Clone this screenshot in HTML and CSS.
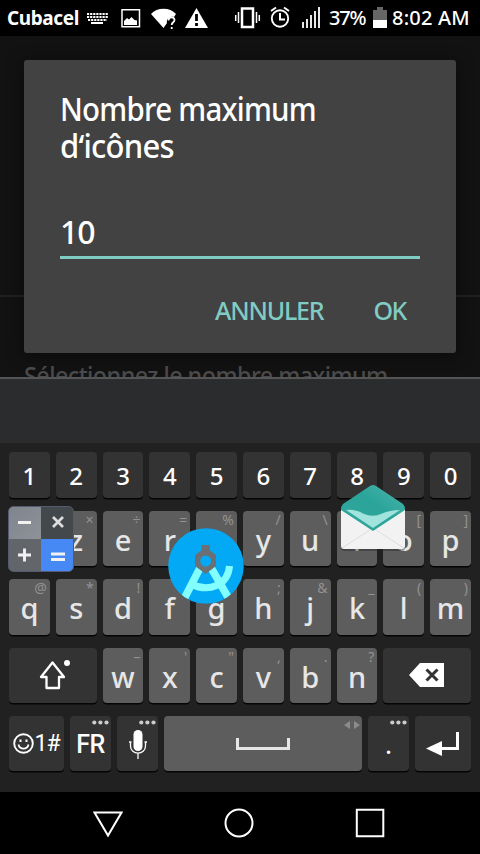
FILE: index.html
```html
<!DOCTYPE html>
<html lang="fr">
<head>
<meta charset="utf-8">
<title>Nombre maximum d‘icônes</title>
<link rel="stylesheet" href="styles.css">
</head>
<body>
<div class="phone">
  <header class="status">
    <span class="carrier">Cubacel</span>
    <svg class="status-icons" width="140" height="36" viewBox="80 0 140 36" fill="#fff">
      <path d="M87 14H108M87 17H108M88 20H107" stroke="#fff" stroke-width="2" stroke-dasharray="2.2 .9" fill="none"/>
      <path d="M91 22h12v2H91z"/>
      <path d="M122 9.800h17.500v17H122z" fill="none" stroke="#fff" stroke-width="1.500"/>
      <path d="M124 25v-4l3-3 2 1.500 2.500-2.500 3 3 2.500.5V25z"/>
      <path d="M151 14C157 7 170 7 176 14L174 17C170 16 166 19 167 23L163.500 28z"/>
      <path d="M168.500 20.500c0-4 6-4 6-.5 0 2.500-2.800 2-2.800 5M171.700 27v2" fill="none" stroke="#fff" stroke-width="1.800"/>
      <path d="M196.500 8L208 28H185z"/>
      <path d="M196.500 14v7M196.500 23v3" stroke="#000" stroke-width="2.800"/>
    </svg>
    <svg class="status-icons signal" width="92" height="36" viewBox="232 0 92 36" fill="none" stroke="#fff">
      <path d="M242 8.500h11v18.500h-11z" stroke-width="2.500"/>
      <path d="M238.500 12v11M256.500 12v11M235.700 15v6M259.300 15v6" stroke-width="1.500"/>
      <circle cx="280" cy="18.500" r="8.200" stroke-width="1.900"/>
      <path d="M280 13v6.500h5M271 11l5-3.500M289 11l-5-3.500" stroke-width="2"/>
      <path d="M303 28v-6M307 28v-9M311 28v-13M315 28V11M319 28V7" stroke-width="1.800"/>
    </svg>
    <span class="percent">37%</span>
    <svg class="battery" width="14" height="36" viewBox="0 0 14 36"><path d="M4 7h6v3h4v10H0V10h4z" fill="#666"/><path d="M0 20h14v8H0z" fill="#fff"/></svg>
    <span class="clock">8:02 AM</span>
  </header>

  <main class="settings">
    <div class="divider"></div>
    <section class="dialog">
      <h1 class="title"><span class="line-one">Nombre maximum</span><br><span class="line-two">d‘icônes</span></h1>
      <div class="field"><span>10</span></div>
      <div class="actions"><span class="cancel">ANNULER</span><span class="ok">OK</span></div>
    </section>
    <p class="summary">Sélectionnez le nombre maximum</p>
  </main>

  <div class="suggestions"></div>

  <section class="keyboard">
    <div class="row digits">
      <div class="key dark">1</div><div class="key dark">2</div><div class="key dark">3</div><div class="key dark">4</div><div class="key dark">5</div><div class="key dark">6</div><div class="key dark">7</div><div class="key dark">8</div><div class="key dark">9</div><div class="key dark">0</div>
    </div>
    <div class="row">
      <div class="key">a<i>+</i></div><div class="key">z<i>×</i></div><div class="key">e<i>÷</i></div><div class="key">r<i>=</i></div><div class="key">t<i>%</i></div><div class="key">y<i>/</i></div><div class="key">u<i>\</i></div><div class="key">i</div><div class="key">o<i>[</i></div><div class="key">p<i>]</i></div>
    </div>
    <div class="row third">
      <div class="key">q<i>@</i></div><div class="key">s<i>*</i></div><div class="key">d<i>!</i></div><div class="key">f</div><div class="key">g</div><div class="key">h<i>;</i></div><div class="key">j<i>&amp;</i></div><div class="key">k<i>_</i></div><div class="key">l<i>(</i></div><div class="key">m<i>)</i></div>
    </div>
    <div class="row">
      <div class="key dark wide">
        <svg width="36" height="34" viewBox="35 660 36 34"><path d="M52.500 664.500L64 679H59v11H46.500V679H41z" fill="none" stroke="#fff" stroke-width="2.300" stroke-linejoin="round"/><circle cx="67" cy="665" r="3" fill="#fff"/></svg>
      </div>
      <div class="key">w<i>–</i></div><div class="key">x<i>'</i></div><div class="key">c<i>"</i></div><div class="key">v<i>,</i></div><div class="key">b<i>.</i></div><div class="key">n<i>?</i></div>
      <div class="key dark wide">
        <svg width="36" height="24" viewBox="0 0 36 24"><path d="M0 12L11 0H35V24H11z" fill="#fff"/><path d="M17.500 6.500l11 11M28.500 6.500l-11 11" stroke="#333" stroke-width="3"/></svg>
      </div>
    </div>
    <div class="row bottom">
      <div class="key dark symbols"><svg width="21" height="21" viewBox="0 0 21 21" fill="none" stroke="#fff"><circle cx="10.500" cy="10.500" r="9.300" stroke-width="1.900"/><path d="M5.500 11.500c1 5.500 9 5.500 10 0" stroke-width="1.700"/><path d="M7.500 6.500v2.500M13.500 6.500v2.500" stroke-width="2"/></svg><span>1#</span></div>
      <div class="key dark lang">FR<svg class="dots" width="17" height="5" viewBox="0 0 17 5" fill="#ccc"><circle cx="2.300" cy="2.500" r="2.100"/><circle cx="8.400" cy="2.500" r="2.100"/><circle cx="14.500" cy="2.500" r="2.100"/></svg></div>
      <div class="key dark mic"><svg width="20" height="30" viewBox="0 0 20 30"><rect x="5.500" y="0" width="9" height="21" rx="4.500" fill="#fff"/><path d="M1 12h2.500M16.500 12H19M2.500 12v4c0 9.500 15 9.500 15 0v-4M10 23.500V29" fill="none" stroke="#fff" stroke-width="1.300"/></svg><svg class="dots" width="17" height="5" viewBox="0 0 17 5" fill="#ccc"><circle cx="2.300" cy="2.500" r="2.100"/><circle cx="8.400" cy="2.500" r="2.100"/><circle cx="14.500" cy="2.500" r="2.100"/></svg></div>
      <div class="key space"><svg width="54" height="12" viewBox="0 0 54 12"><path d="M1.500 0v10.500h51V0" fill="none" stroke="#e6e6e6" stroke-width="3"/></svg><svg class="arrows" width="16" height="8" viewBox="0 0 16 8" fill="#8c8c8c"><path d="M6 0v8L0 4zM10 0v8l6-4z"/></svg></div>
      <div class="key dark period">.<svg class="dots" width="17" height="5" viewBox="0 0 17 5" fill="#ccc"><circle cx="2.300" cy="2.500" r="2.100"/><circle cx="8.400" cy="2.500" r="2.100"/><circle cx="14.500" cy="2.500" r="2.100"/></svg></div>
      <div class="key dark enter"><svg width="34" height="24" viewBox="0 0 34 24"><path d="M31.500 0v16.500H15" fill="none" stroke="#fff" stroke-width="3"/><path d="M0 16.500L16 9v15z" fill="#fff"/></svg></div>
    </div>
  </section>

  <nav class="nav">
    <svg width="30" height="30" viewBox="0 0 30 30"><path d="M1.500 4.500h27L15 27.500z"/></svg>
    <svg width="30" height="30" viewBox="0 0 30 30"><circle cx="15" cy="15" r="13.500"/></svg>
    <svg width="30" height="30" viewBox="0 0 30 30"><path d="M1.800 1.800h26.500v26.500H1.800z"/></svg>
  </nav>

  <svg class="floating calculator" width="66" height="66" viewBox="0 0 66 66">
    <defs><clipPath id="tile"><rect x=".5" y=".5" width="65" height="65" rx="5"/></clipPath><linearGradient id="slate" x2="1" y2="1"><stop stop-color="#7f858d"/><stop offset="1" stop-color="#8e9299"/></linearGradient></defs>
    <g clip-path="url(#tile)"><path d="M0 0h33v33H0z" fill="url(#slate)"/><path d="M33 0h33v33H33z" fill="#43484d"/><path d="M0 33h33v33H0z" fill="#62656a"/><path d="M33 33h33v33H33z" fill="#4688f4"/></g>
    <rect x=".5" y=".5" width="65" height="65" rx="5" fill="none" stroke="#545b70"/>
    <path d="M10 16.500h13M10 49h13M16.500 42.500v13M43 48h14M43 53.500h14" stroke="#f1f1f1" stroke-width="2.900"/>
    <path d="M45 11l10 10M55 11L45 21" stroke="#ddd" stroke-width="2.700"/>
  </svg>
  <svg class="floating compass" width="76" height="76" viewBox="0 0 76 76">
    <defs><clipPath id="disc"><circle cx="38" cy="38" r="37.800"/></clipPath></defs>
    <g clip-path="url(#disc)"><path d="M0 0h76v76H0z" fill="#03a9f4"/>
    <path d="M33 38L16.500 70M42 38L60.500 70" stroke="#84ffff" stroke-width="7.500"/>
    <path d="M23 56C41 65 60 57 61.500 38" fill="none" stroke="#84ffff" stroke-width="7"/></g>
    <path d="M33.500 17h8.500v5.500l6 4.500v11l-10.300 8L27 38V27l6.500-4.500z" fill="#6a7074"/><circle cx="37.700" cy="33" r="5.500" fill="#03a9f4"/>
  </svg>
  <svg class="floating mail" width="68" height="70" viewBox="0 0 68 70">
    <defs><linearGradient id="teal" x1="1" x2="0" y2="1"><stop stop-color="#4db6ac"/><stop offset=".45" stop-color="#2aa49a"/><stop offset="1" stop-color="#35a69b"/></linearGradient></defs>
    <path d="M2 24h64v39q0 3-3 3H5q-3 0-3-3z" fill="#222" opacity=".4"/>
    <path d="M2 24h64v37q0 3-3 3H5q-3 0-3-3z" fill="#f2f2f2"/>
    <path d="M3 63L34 43 65 63" fill="none" stroke="#dedede"/>
    <path d="M31 1q3-2 6 0l27 18q2 2 2 6L34 46 2 25q0-4 2-6z" fill="url(#teal)"/>
    <path d="M7 25Q16 24 24 28.500 34 33 43 28.500 51 25 61 25L34 43z" fill="#a0e4dd"/>
  </svg>
</div>
</body>
</html>
```
FILE: styles.css
```css
* { box-sizing: border-box; }
body { margin: 0; background: #000; }
svg { display: block; flex: none; }
.phone {
  position: relative;
  width: 480px;
  height: 854px;
  overflow: hidden;
  display: flex;
  flex-direction: column;
  font-family: "Noto Sans", "Open Sans", sans-serif;
  color: #fff;
}
.status {
  height: 36px;
  flex: none;
  display: flex;
  align-items: center;
  padding-left: 7px;
  background: #000;
  font-size: 20px;
  font-weight: 500;
  line-height: 38px;
  white-space: nowrap;
}
.carrier { width: 73px; font-size: 19px; font-weight: 700; letter-spacing: -.4px; }
.signal { margin-left: 12px; }
.percent { width: 44px; margin-left: 5px; letter-spacing: -1.200px; }
.clock { margin-left: 5px; letter-spacing: .2px; }

.settings {
  position: relative;
  height: 341px;
  flex: none;
  padding: 24px 24px 0;
  overflow: hidden;
  background: #121212;
}
.divider { position: absolute; left: 0; right: 0; top: 259px; height: 2px; background: #222; }
.dialog {
  position: relative;
  height: 293px;
  padding: 30px 36px 0;
  border-radius: 3px;
  background: #424242;
  box-shadow: 0 2px 16px #0008;
}
.title { height: 74px; margin: 0; font-size: 32px; font-weight: 500; line-height: 37px; letter-spacing: -.8px; }
.title span { display: inline-block; vertical-align: top; transform-origin: left; white-space: nowrap; }
.line-one { transform: scaleX(.92); }
.line-two { transform: scaleX(.97); }
.field {
  height: 95px;
  padding-top: 50px;
  border-bottom: 3px solid #80cbc4;
  font-size: 32px;
  font-weight: 500;
  line-height: 36px;
  letter-spacing: -1px;
}
.actions {
  display: flex;
  justify-content: flex-end;
  gap: 50px;
  padding: 34px 14px 0 0;
  color: #80cbc4;
  font-size: 25px;
  font-weight: 500;
  line-height: 35px;
}
.cancel { letter-spacing: -1.200px; }
.ok { letter-spacing: -1.400px; }
.summary { margin: 5px 0 0; color: #4a4a4a; font-size: 25px; font-weight: 500; line-height: 34px; white-space: nowrap; letter-spacing: -.6px; transform: scaleX(.935); transform-origin: left; }

.suggestions { height: 66px; flex: none; background: #2b2c2e; border-top: 2px solid #555; }
.keyboard {
  height: 349px;
  flex: none;
  display: flex;
  flex-direction: column;
  gap: 13px;
  padding: 9px 9px 0;
  background: #212121;
}
.row { height: 55.300px; flex: none; display: grid; grid-template-columns: repeat(10, 1fr); gap: 6px; }
.digits { height: 46px; }
.bottom { grid-template-columns: 55px 41px 41px 198px 41px 56px; }
.key {
  position: relative;
  display: flex;
  align-items: center;
  justify-content: center;
  padding-top: 3px;
  border-radius: 4px;
  background: #5d5d5d;
  box-shadow: 0 1.500px 0 #050505;
  color: #e6e6e6;
  font-size: 29px;
  font-weight: 500;
  line-height: 40px;
}
.dark { background: #333; color: #fff; }
.digits .key { font-size: 24px; padding-top: 2px; }
.wide { grid-column: span 2; padding-top: 0; }
.key i {
  position: absolute;
  top: 1px;
  right: 3px;
  color: #929292;
  font-size: 14px;
  font-style: normal;
  font-weight: 400;
  line-height: 16px;
}
.symbols { padding: 0; font-family: Roboto, sans-serif; font-size: 23px; font-weight: 400; }
.symbols span { letter-spacing: -1px; }
.lang { font-family: Roboto, sans-serif; font-size: 25px; letter-spacing: -.5px; }
.mic { padding-top: 2px; }
.space { padding-top: 0; }
.enter { padding-top: 0; }
.period { padding-top: 2px; font-size: 24px; }
.dots { position: absolute; top: 4px; right: 2px; }
.arrows { position: absolute; top: 5px; right: 2px; }
.nav { height: 62px; display: flex; justify-content: center; align-items: center; gap: 101px; padding-right: 2px; background: #000; }
.nav svg { fill: none; stroke: #fff; stroke-width: 2; }

.floating { position: absolute; }
.calculator { left: 8px; top: 506px; }
.compass { left: 168px; top: 528px; }
.mail { left: 339px; top: 485px; }
```
